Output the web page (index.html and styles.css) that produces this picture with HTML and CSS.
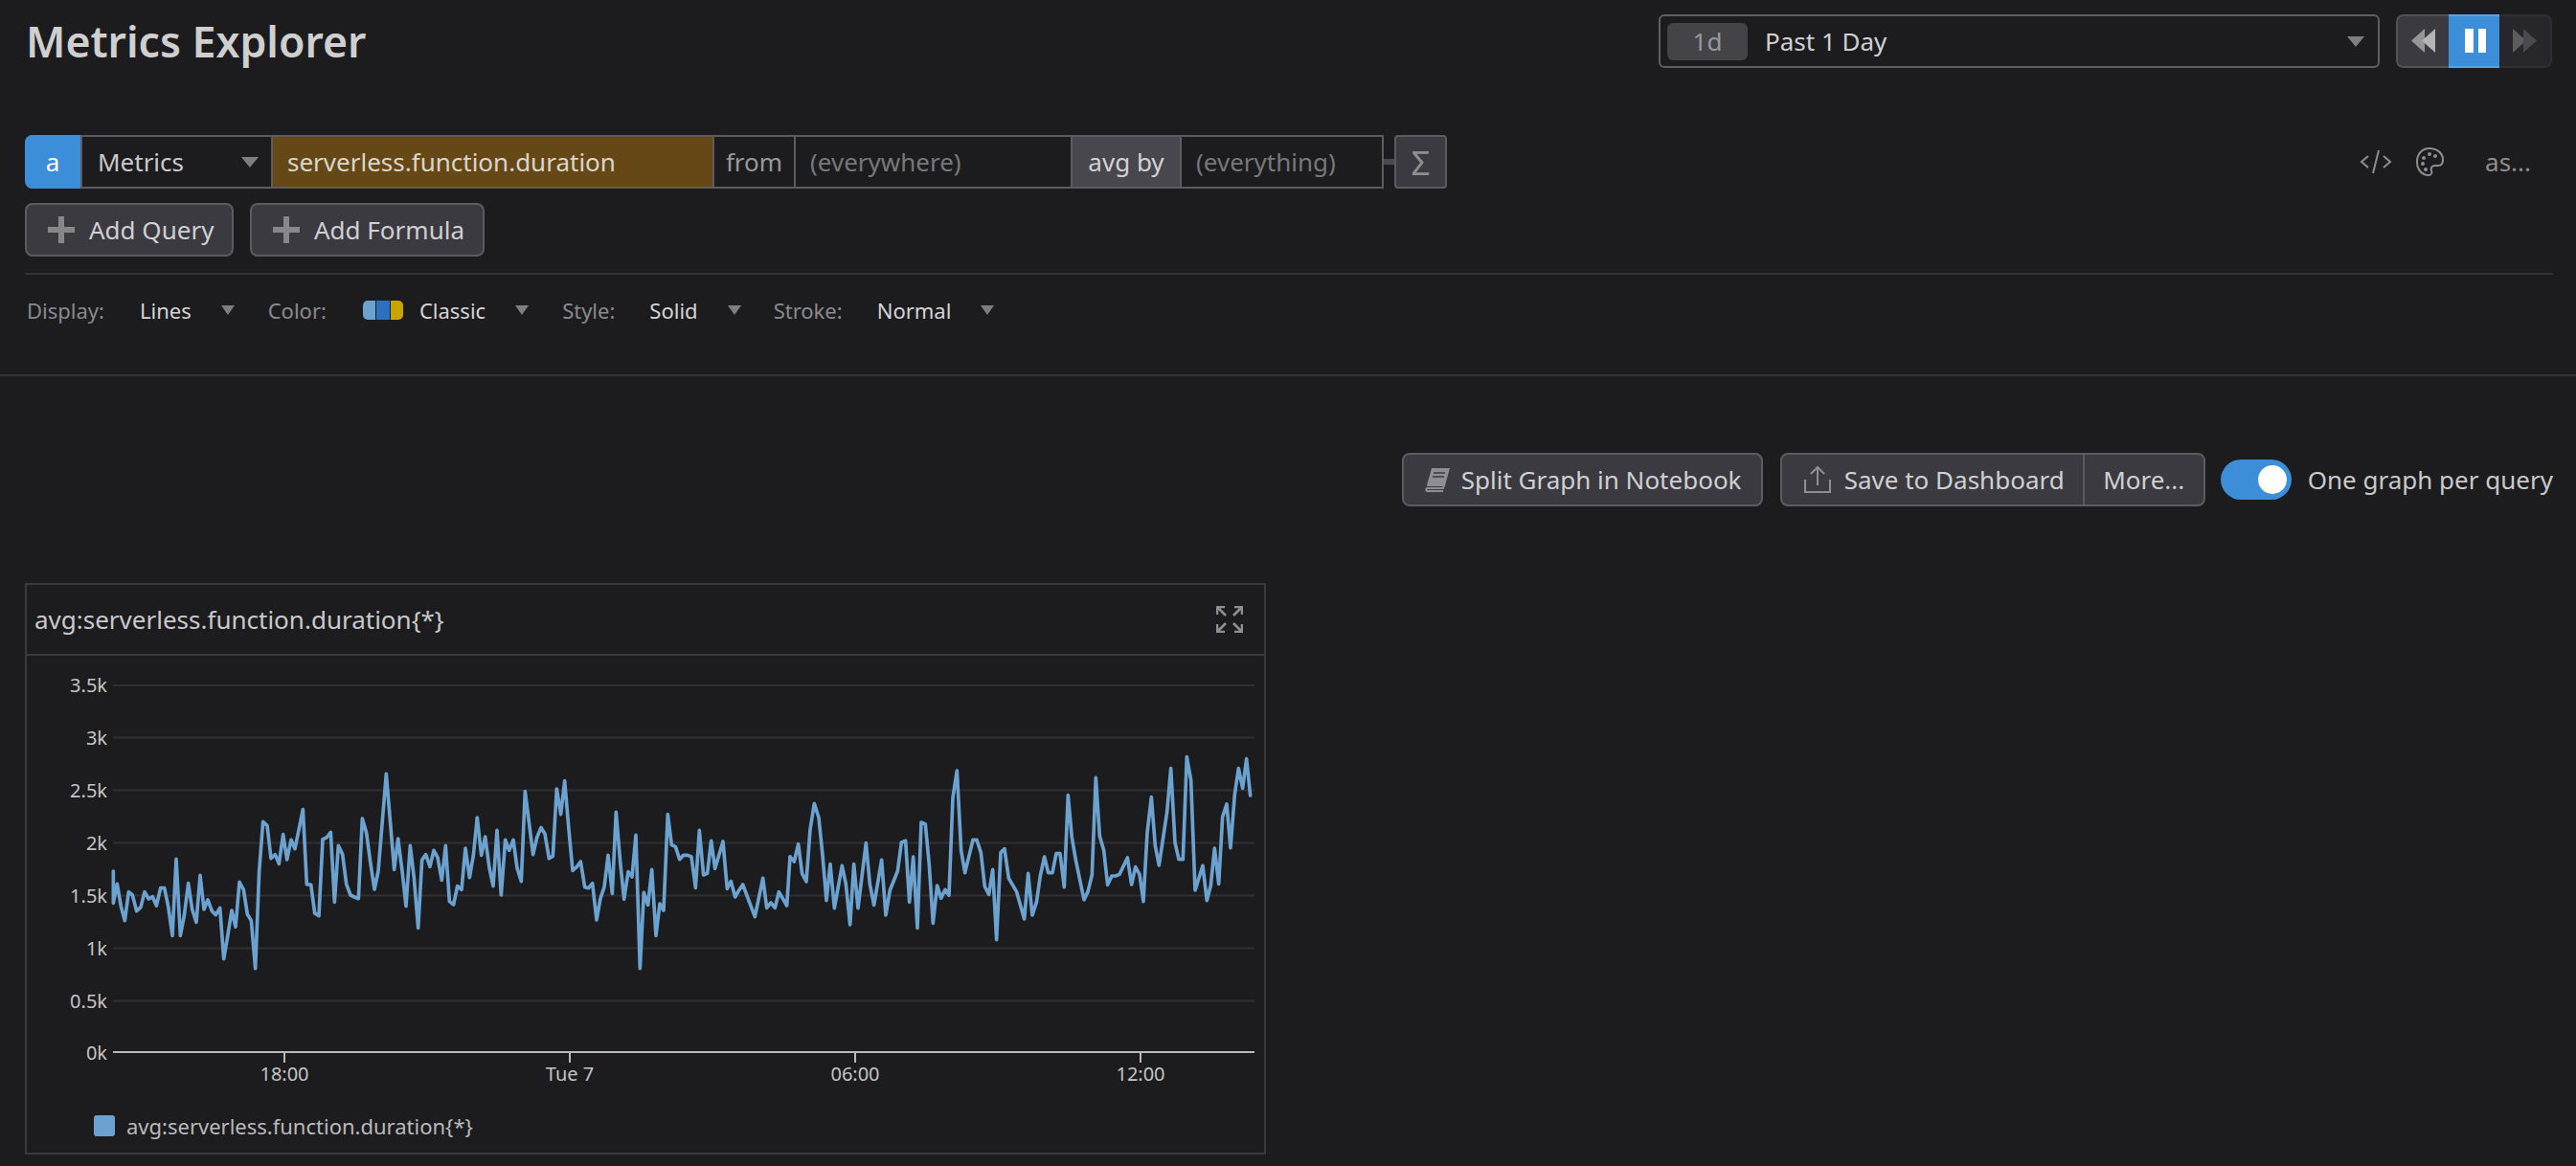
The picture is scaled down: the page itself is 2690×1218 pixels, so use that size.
FILE: index.html
```html
<!DOCTYPE html>
<html lang="en">
<head>
<meta charset="utf-8">
<title>Metrics Explorer</title>
<link rel="stylesheet" href="styles.css">
</head>
<body>
<div class="page">
  <header class="topbar">
    <h1 class="title">Metrics Explorer</h1>
    <div class="time">
      <div class="picker">
        <span class="badge">1d</span>
        <span class="picker-text">Past 1 Day</span>
        <span class="caret picker-caret"></span>
      </div>
      <div class="playback">
        <span class="pb pb-back"><svg width="26" height="26" viewBox="0 0 26 26"><polygon points="14,0 14,25 0,12.5" fill="#96969a"/><polygon points="25,0 25,25 11,12.5" fill="#b4b4b8"/></svg></span>
        <span class="pb pb-pause"><svg width="24" height="26" viewBox="0 0 24 26"><rect x="2" width="9" height="25" fill="#fff"/><rect x="16" width="8" height="25" fill="#fff"/></svg></span>
        <span class="pb pb-next"><svg width="26" height="26" viewBox="0 0 26 26"><polygon points="0,0 14,12.5 0,25" fill="#5d5d60"/><polygon points="11,0 25,12.5 11,25" fill="#4a4a4e"/></svg></span>
      </div>
    </div>
  </header>

  <section class="queryrow">
    <div class="query">
      <span class="q q-letter">a</span>
      <span class="q q-source">Metrics<span class="caret"></span></span>
      <span class="q q-metric">serverless.function.duration</span>
      <span class="q q-from">from</span>
      <span class="q q-where">(everywhere)</span>
      <span class="q q-avg">avg by</span>
      <span class="q q-every">(everything)</span>
    </div>
    <span class="connector"></span>
    <span class="sigma">Σ</span>
    <div class="query-tools">
      <svg class="tool-code" width="34" height="30" viewBox="0 0 34 30"><path d="M9 9 2 15l7 6M25 9l7 6-7 6M20 3l-6 24" fill="none" stroke="#8e8e92" stroke-width="2"/></svg>
      <svg class="tool-palette" width="30" height="32" viewBox="0 0 30 32"><path d="M15 2C7 2 2 8 2 16c0 8 5 14 12 14 3 0 4-2 3-5-1-3 1-5 4-5h3c3 0 5-2 5-6C29 7 23 2 15 2Z" fill="none" stroke="#8e8e92" stroke-width="2"/><circle cx="9" cy="12" r="2" fill="#8e8e92"/><circle cx="15" cy="8" r="2" fill="#8e8e92"/><circle cx="21" cy="10" r="2" fill="#8e8e92"/><circle cx="8" cy="18" r="2" fill="#8e8e92"/><circle cx="11" cy="24" r="2" fill="#8e8e92"/></svg>
      <span class="tool-as">as...</span>
    </div>
  </section>

  <section class="addrow">
    <button class="btn btn-add"><svg width="28" height="28" viewBox="0 0 28 28"><path d="M11 0h6v11h11v6H17v11h-6V17H0v-6h11z" fill="#87878b"/></svg>Add Query</button>
    <button class="btn btn-add"><svg width="28" height="28" viewBox="0 0 28 28"><path d="M11 0h6v11h11v6H17v11h-6V17H0v-6h11z" fill="#87878b"/></svg>Add Formula</button>
  </section>
  <div class="rule rule-inset"></div>

  <section class="display">
    <span class="d-label l-display">Display:</span><span class="d-value v-lines">Lines</span><span class="caret c-lines"></span>
    <span class="d-label l-color">Color:</span>
    <span class="swatch"><i class="s1"></i><i class="s2"></i><i class="s3"></i></span>
    <span class="d-value v-classic">Classic</span><span class="caret c-classic"></span>
    <span class="d-label l-style">Style:</span><span class="d-value v-solid">Solid</span><span class="caret c-solid"></span>
    <span class="d-label l-stroke">Stroke:</span><span class="d-value v-normal">Normal</span><span class="caret c-normal"></span>
  </section>
  <div class="rule"></div>

  <section class="actions">
    <button class="btn btn-split">
      <svg width="28" height="26" viewBox="0 0 28 26"><path d="M8 1h19l-5 18H3Z" fill="#8f8f93"/><path d="M3 19h18l-1 3H3a2 2 0 0 0 0 3h17" fill="none" stroke="#8f8f93" stroke-width="2"/><path d="M10 6h12M9 10h12" stroke="#3b3a40" stroke-width="1.5"/></svg>
      Split Graph in Notebook</button>
    <div class="btn-group">
      <button class="btn-part part-save">
        <svg width="28" height="30" viewBox="0 0 28 30"><path d="M14 21V2M7 9l7-7 7 7M1 15v13h26V15" fill="none" stroke="#8f8f93" stroke-width="2"/></svg>
        Save to Dashboard</button>
      <button class="btn-part part-more">More...</button>
    </div>
    <span class="toggle"><span class="knob"></span></span>
    <span class="toggle-label">One graph per query</span>
  </section>

  <section class="panel">
    <div class="panel-head">
      <span class="panel-title">avg:serverless.function.duration{*}</span>
      <svg class="expand" width="28" height="28" viewBox="0 0 28 28"><g fill="none" stroke="#8e8e92" stroke-width="2.6"><path d="M1 9V1h8M2 2l8 8M19 1h8v8M26 2l-8 8M1 19v8h8M2 26l8-8M27 19v8h-8M26 26l-8-8"/></g></svg>
    </div>
    <svg class="chart" width="1292" height="466" viewBox="28 685 1292 466">
      <g class="grid">
        <line x1="118" x2="1310" y1="716" y2="716"/>
        <line x1="118" x2="1310" y1="770.5" y2="770.5"/>
        <line x1="118" x2="1310" y1="825.5" y2="825.5"/>
        <line x1="118" x2="1310" y1="880.5" y2="880.5"/>
        <line x1="118" x2="1310" y1="935.5" y2="935.5"/>
        <line x1="118" x2="1310" y1="990.5" y2="990.5"/>
        <line x1="118" x2="1310" y1="1045.5" y2="1045.5"/>
      </g>
      <g class="axis">
        <line x1="118" x2="1310" y1="1099" y2="1099"/>
        <line x1="297" x2="297" y1="1099" y2="1110"/>
        <line x1="595" x2="595" y1="1099" y2="1110"/>
        <line x1="893" x2="893" y1="1099" y2="1110"/>
        <line x1="1191" x2="1191" y1="1099" y2="1110"/>
      </g>
      <g class="ylabels">
        <text x="112" y="723">3.5k</text>
        <text x="112" y="778">3k</text>
        <text x="112" y="833">2.5k</text>
        <text x="112" y="888">2k</text>
        <text x="112" y="943">1.5k</text>
        <text x="112" y="998">1k</text>
        <text x="112" y="1053">0.5k</text>
        <text x="112" y="1107">0k</text>
      </g>
      <g class="xlabels">
        <text x="297" y="1129">18:00</text>
        <text x="595" y="1129">Tue 7</text>
        <text x="893" y="1129">06:00</text>
        <text x="1191" y="1129">12:00</text>
      </g>
      <g class="series" transform="translate(100 760) scale(0.33333)">
        <polyline points="55,450 55,550 67,490 79,560 91,605 103,515 115,525 128,575 141,563 153,515 166,537 178,530 190,558 203,503 215,503 227,560 240,652 252,412 265,652 277,590 290,488 302,570 315,610 327,463 339,570 351,540 364,575 376,587 389,565 401,725 413,655 426,573 438,625 450,484 463,508 475,585 487,605 500,755 512,450 524,295 537,307 549,410 562,398 574,427 587,335 599,414 612,352 624,380 649,257 661,492 674,492 686,582 699,590 711,350 723,345 736,328 748,547 760,370 773,397 785,490 798,525 810,531 823,536 835,285 848,330 860,420 873,507 885,450 910,145 923,300 935,445 947,348 960,450 972,560 985,370 997,470 1010,628 1022,415 1034,398 1047,436 1059,385 1071,407 1084,478 1096,370 1108,545 1121,555 1133,497 1146,508 1158,378 1171,470 1183,400 1195,283"/>
        <g transform="translate(1050 0)">
          <polyline points="145,283 158,400 170,342 183,440 195,497 207,322 220,525 233,352 245,385 258,352 270,440 283,482 295,200 307,295 320,398 332,345 345,313 357,333 370,410 382,403 394,192 407,272 419,167 432,320 444,448 457,437 469,420 482,500 494,503 506,488 519,603 531,535 543,500 555,400 568,520 580,265 593,420 605,538 618,452 630,468 642,337 655,755 667,517 680,556 692,445 705,652 717,552 729,573 742,272 754,368 766,373 779,413 791,400 804,400 816,405 829,502 841,322 854,462 866,457 878,355 890,442 915,357 928,505 940,482 953,531 965,510 977,492 1015,593 1040,472 1052,565 1065,549 1078,565 1090,515 1115,558 1125,405"/>
        </g>
        <g transform="translate(2100 0)">
          <polyline points="75,405 88,420 101,365 113,458 126,483 138,320 151,238 165,282 177,400 189,542 201,428 214,566 238,433 250,490 263,618 275,428 288,566 313,362 325,490 338,556 362,415 375,588 388,510 412,450 424,360 437,355 449,547 461,405 474,628 486,297 499,303 511,430 523,613 536,495 548,535 561,508 573,526 585,220 598,135 611,385 623,455 648,352 660,352 673,392 685,498 698,523 710,445 722,665 735,392 747,380 760,472 785,515 809,600 821,457 834,588 847,548 859,465 872,405 884,455 897,455 909,395 921,395 934,500 946,212 958,345 971,420 996,540 1008,515 1021,462 1033,157 1045,340 1058,385 1070,493 1083,465 1095,465 1107,460 1132,408 1145,492 1157,437 1170,460 1182,545 1194,330 1207,218 1219,370 1231,432 1256,265 1268,128 1281,360 1293,413 1306,413 1318,92 1331,165 1344,510 1368,433 1381,542 1393,495 1405,378 1418,490 1430,280 1443,240 1455,377 1468,210 1480,128 1493,190 1505,98 1517,213"/>
        </g>
      </g>
    </svg>
    <div class="legend"><span class="legend-swatch"></span><span class="legend-text">avg:serverless.function.duration{*}</span></div>
  </section>
</div>
</body>
</html>
```

FILE: styles.css
```css
* { box-sizing: border-box; }
html, body { margin: 0; padding: 0; }
body {
  background: #1c1c1e;
  font-family: "Noto Sans", "Open Sans", sans-serif;
  color: #c9c9cb;
  overflow: hidden;
}
.page { width: 2690px; height: 1218px; }

.caret {
  display: inline-block;
  width: 0;
  height: 0;
  border-left: 9px solid transparent;
  border-right: 9px solid transparent;
  border-top: 11px solid #7e7e81;
}

/* Top bar */
.topbar {
  display: flex;
  justify-content: space-between;
  align-items: center;
  height: 71px;
  padding: 15px 25px 0 27px;
}
.title {
  margin: 0;
  font-size: 44.6px;
  font-weight: 600;
  line-height: 56px;
  color: #cfcfd0;
}
.time { display: flex; gap: 17px; }
.picker {
  display: flex;
  align-items: center;
  width: 753px;
  height: 56px;
  padding: 0 14px 0 7px;
  border: 2px solid #5e5e63;
  border-radius: 6px;
}
.badge {
  display: flex;
  align-items: center;
  justify-content: center;
  width: 84px;
  height: 39px;
  border-radius: 6px;
  background: #434348;
  color: #98989c;
  font-size: 26px;
}
.picker-text { margin-left: 18px; font-size: 26px; color: #d0d0d2; }
.picker-caret { margin-left: auto; }
.playback {
  display: flex;
  width: 163px;
  height: 56px;
  border-radius: 7px;
  overflow: hidden;
}
.pb {
  display: flex;
  flex: 1;
  align-items: center;
  justify-content: center;
}
.pb-back { background: #3b3a40; border: 2px solid #525257; border-right: 0; border-radius: 7px 0 0 7px; }
.pb-pause { background: #3d8ed8; border: 2px solid #5aa2e2; border-width: 2px 0; }
.pb-next { background: #26262b; border: 2px solid #2e2e33; border-left: 0; border-radius: 0 7px 7px 0; }

/* Query row */
.queryrow {
  display: flex;
  align-items: stretch;
  height: 56px;
  margin-top: 70px;
  padding: 0 25px 0 26px;
}
.query {
  display: flex;
  width: 1419px;
  border: 2px solid #5b5b60;
  border-radius: 8px 0 0 8px;
  font-size: 26px;
}
.q {
  display: flex;
  align-items: center;
  border-left: 2px solid #5b5b60;
}
.q-letter {
  width: 58px;
  margin: -2px 0 -2px -2px;
  justify-content: center;
  border-left: 0;
  border-radius: 8px 0 0 8px;
  background: #3d8ed8;
  color: #fff;
}
.q-source {
  width: 199px;
  padding: 0 13px 0 16px;
  justify-content: space-between;
  color: #c9c9cb;
}
.q-metric {
  width: 461px;
  padding-left: 15px;
  background: #664816;
  color: #d9d6cd;
}
.q-from { width: 85px; justify-content: center; color: #98989c; }
.q-where { width: 289px; padding-left: 15px; color: #77777b; }
.q-avg { width: 114px; justify-content: center; background: #47474d; color: #d2d2d4; }
.q-every { flex: 1; padding-left: 15px; color: #77777b; }
.connector { width: 11px; height: 6px; margin-top: 25px; background: #4a4a4f; }
.sigma {
  display: flex;
  align-items: center;
  justify-content: center;
  width: 55px;
  border: 2px solid #5b5b60;
  border-radius: 4px;
  background: #3b3a40;
  color: #8e8e92;
  font-size: 35px;
  line-height: 1;
}
.query-tools {
  display: flex;
  align-items: center;
  margin-left: auto;
  font-size: 26px;
  color: #8e8e92;
}
.tool-palette { margin-left: 24px; }
.tool-as { margin-left: 43px; margin-right: 22px; }

/* Buttons */
.btn {
  display: flex;
  align-items: center;
  height: 56px;
  padding: 0;
  border: 2px solid #5b5b60;
  border-radius: 8px;
  background: #3b3a40;
  color: #d0d0d2;
  font-family: inherit;
  font-size: 26px;
}
.addrow {
  display: flex;
  gap: 17px;
  margin-top: 15px;
  padding-left: 26px;
}
.btn-add { padding-left: 22px; gap: 15px; }
.btn-add:nth-child(1) { width: 218px; }
.btn-add:nth-child(2) { width: 245px; }

.rule { height: 2px; background: #333336; }
.rule-inset { margin: 17px 24px 0 26px; }

/* Display options */
.display {
  display: flex;
  align-items: center;
  height: 104px;
  padding: 0 0 30px 28px;
  font-size: 22px;
}
.d-label { color: #8a8a8e; }
.d-value { color: #d4d4d6; }
.display .caret { border-left-width: 7px; border-right-width: 7px; border-top-width: 10px; }
.v-lines { margin-left: 37px; }
.c-lines { margin-left: 31px; }
.l-color { margin-left: 35px; }
.swatch { display: flex; gap: 1px; width: 42px; height: 20px; margin-left: 38px; border-radius: 5px; overflow: hidden; }
.swatch i { display: block; flex: 1; }
.s1 { background: #6ba2d0; }
.s2 { background: #2a6fc0; }
.s3 { background: #c9a400; }
.v-classic { margin-left: 17px; }
.c-classic { margin-left: 31px; }
.l-style { margin-left: 35px; }
.v-solid { margin-left: 36px; }
.c-solid { margin-left: 31px; }
.l-stroke { margin-left: 34px; }
.v-normal { margin-left: 36px; }
.c-normal { margin-left: 31px; }

/* Actions */
.actions {
  display: flex;
  align-items: center;
  justify-content: flex-end;
  height: 56px;
  margin-top: 80px;
  padding-right: 24px;
}
.btn-split { width: 377px; padding-left: 21px; gap: 11px; }
.btn-group {
  display: flex;
  height: 56px;
  margin-left: 18px;
  border: 2px solid #5b5b60;
  border-radius: 8px;
  background: #3b3a40;
}
.btn-part {
  display: flex;
  align-items: center;
  padding: 0;
  border: 0;
  background: none;
  color: #d0d0d2;
  font-family: inherit;
  font-size: 26px;
}
.part-save { width: 314px; padding-left: 23px; gap: 14px; }
.part-more { width: 126px; justify-content: center; border-left: 2px solid #5b5b60; }
.toggle {
  display: block;
  position: relative;
  width: 74px;
  height: 42px;
  margin-left: 16px;
  border-radius: 21px;
  background: #3d8ed8;
}
.knob {
  position: absolute;
  top: 6px;
  right: 5px;
  width: 30px;
  height: 30px;
  border-radius: 50%;
  background: #fff;
}
.toggle-label { margin-left: 17px; font-size: 26px; color: #c9c9cb; }

/* Panel */
.panel {
  width: 1296px;
  height: 597px;
  margin: 80px 0 0 26px;
  border: 2px solid #3a3a3d;
}
.panel-head {
  display: flex;
  align-items: center;
  justify-content: space-between;
  height: 74px;
  padding: 0 22px 0 8px;
  border-bottom: 2px solid #3a3a3d;
}
.panel-title { font-size: 26px; color: #c9c9cb; }
.chart { display: block; }
.grid line { stroke: #303033; stroke-width: 2; }
.axis line { stroke: #b9b9bb; stroke-width: 2; }
.ylabels text { fill: #c4c4c6; font-size: 20px; text-anchor: end; }
.xlabels text { fill: #c4c4c6; font-size: 20px; text-anchor: middle; }
.series polyline {
  fill: none;
  stroke: #6ba2d0;
  stroke-width: 11;
  stroke-linejoin: round;
  stroke-linecap: round;
}
.legend {
  display: flex;
  align-items: center;
  gap: 12px;
  height: 50px;
  padding-left: 70px;
}
.legend-swatch { width: 22px; height: 22px; border-radius: 3px; background: #6ba2d0; }
.legend-text { font-size: 22px; color: #b9b9bb; }
```
